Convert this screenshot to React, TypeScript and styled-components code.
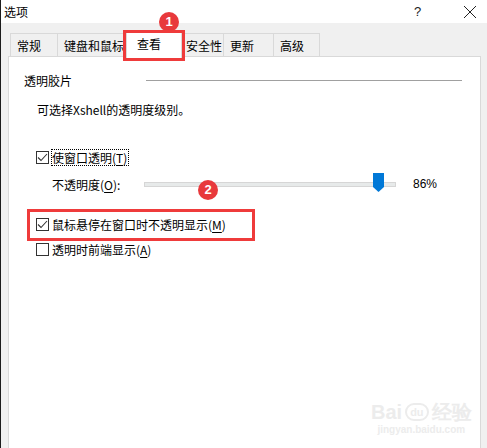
import React from "react";
import styled, { createGlobalStyle } from "styled-components";

const Global = createGlobalStyle`
  html, body { margin: 0; padding: 0; background: #f0f0f0; }
  body { font-family: "Noto Sans CJK SC", "Noto Sans", "Liberation Sans", sans-serif; font-size: 12px; color: #000; }
`;

const Window = styled.div`
  position: relative;
  width: 487px;
  height: 448px;
  overflow: hidden;
  box-sizing: border-box;
  border-left: 1px solid #1c1c1c;
  background: #f0f0f0;
`;

const TitleBar = styled.div`
  height: 23px;
  background: #fff;
  display: flex;
  align-items: center;
  padding-left: 3px;
  line-height: 16px;
`;

const TitleText = styled.div`
  flex: 1;
  font-size: 12px;
`;

const Help = styled.div`
  width: 14px;
  font-family: "Liberation Sans", sans-serif;
  font-size: 13px;
  margin-right: 34px;
  color: #222;
`;

const Close = styled.div`
  width: 16px;
  height: 16px;
  margin-right: 9px;
  display: flex;
  align-items: center;
  justify-content: center;
`;

const Body = styled.div`
  padding: 7px 6px 0 7px;
`;

const TabStrip = styled.div`
  display: flex;
  align-items: flex-end;
  height: 27px;
  padding-left: 2px;
  position: relative;
  z-index: 1;
`;

const Tab = styled.div<{ $w: number; $active?: boolean; $first?: boolean }>`
  box-sizing: border-box;
  width: ${(p) => p.$w}px;
  height: ${(p) => (p.$active ? 28 : 24)}px;
  margin: ${(p) => (p.$active ? "0 -2px -1px -2px" : "0")};
  padding-left: ${(p) => (p.$active ? 10 : 6)}px;
  padding-top: ${(p) => (p.$active ? 5 : 4)}px;
  background: ${(p) => (p.$active ? "#fff" : "#f0f0f0")};
  border: 1px solid #d9d9d9;
  border-bottom: ${(p) => (p.$active ? "none" : "1px solid #d9d9d9")};
  border-left: ${(p) => (p.$first || p.$active ? "1px solid #d9d9d9" : "none")};
  position: relative;
  z-index: ${(p) => (p.$active ? 2 : 1)};
  white-space: nowrap;
  overflow: hidden;
  line-height: 16px;
  font-size: 12px;
`;

const Panel = styled.div`
  box-sizing: border-box;
  width: 473px;
  height: 400px;
  background: #fff;
  border: 1px solid #d9d9d9;
  margin-top: -1px;
  padding-top: 16px;
  display: flex;
  flex-direction: column;
`;

const GroupHeader = styled.div`
  display: flex;
  align-items: center;
  height: 16px;
  padding-left: 15px;
  padding-right: 18px;
  line-height: 16px;
`;

const GroupLine = styled.div`
  flex: 1;
  height: 1px;
  background: #a0a0a0;
  margin-left: 74px;
  margin-top: -2px;
`;

const Text = styled.div<{ $top: number; $left: number }>`
  height: 16px;
  line-height: 16px;
  margin-top: ${(p) => p.$top}px;
  padding-left: ${(p) => p.$left}px;
  white-space: nowrap;
`;

const CheckRow = styled.div<{ $top: number }>`
  display: flex;
  align-items: center;
  height: 16px;
  margin-top: ${(p) => p.$top}px;
  padding-left: 27px;
`;

const Box = styled.div`
  box-sizing: border-box;
  width: 13px;
  height: 13px;
  border: 1px solid #333;
  background: #fff;
  display: flex;
  align-items: center;
  justify-content: center;
  margin-right: 3px;
`;

const Label = styled.span<{ $focus?: boolean }>`
  line-height: 15px;
  padding: 0 1px 0 0;
  outline: ${(p) => (p.$focus ? "1px dotted #000" : "none")};
  white-space: nowrap;
`;

const U = styled.span`
  text-decoration: underline;
  text-underline-offset: 2px;
`;

const SliderRow = styled.div`
  display: flex;
  align-items: center;
  height: 16px;
  margin-top: 11px;
  padding-left: 43px;
`;

const SliderLabel = styled.span`
  width: 92px;
  white-space: nowrap;
`;

const Track = styled.div`
  position: relative;
  box-sizing: border-box;
  width: 252px;
  height: 5px;
  background: #e7eaea;
  border: 1px solid #d6d6d6;
`;

const Thumb = styled.svg`
  position: absolute;
  top: -10px;
`;

const Percent = styled.span`
  margin-left: 17px;
  font-family: "Liberation Sans", "Noto Sans", sans-serif;
  font-size: 12px;
`;

const HighlightBox = styled.div<{ $x: number; $y: number; $w: number; $h: number }>`
  position: absolute;
  left: ${(p) => p.$x}px;
  top: ${(p) => p.$y}px;
  width: ${(p) => p.$w}px;
  height: ${(p) => p.$h}px;
  box-sizing: border-box;
  border: 3px solid #ef3b3b;
  z-index: 5;
`;

const Badge = styled.div<{ $x: number; $y: number }>`
  position: absolute;
  left: ${(p) => p.$x}px;
  top: ${(p) => p.$y}px;
  width: 20px;
  height: 20px;
  border-radius: 50%;
  background: #e8393c;
  color: #fff;
  font-family: "Liberation Sans", sans-serif;
  font-weight: bold;
  font-size: 13px;
  line-height: 20px;
  text-align: center;
  z-index: 4;
`;

const Watermark = styled.div`
  position: absolute;
  left: 370px;
  top: 400px;
  color: #ececec;
  display: flex;
  flex-direction: column;
  align-items: center;
`;

const WmTop = styled.div`
  font-family: "Liberation Sans", sans-serif;
  font-weight: bold;
  font-size: 20px;
  line-height: 24px;
  display: flex;
  align-items: center;
  gap: 3px;
`;

const WmPaw = styled.span`
  font-size: 11px;
  border: 2px solid #ececec;
  border-radius: 10px;
  padding: 0 3px;
  line-height: 14px;
`;

const WmSub = styled.div`
  font-family: "Liberation Sans", sans-serif;
  font-size: 10px;
  font-weight: bold;
  line-height: 12px;
`;

const Check = () => (
  <svg width="11" height="11" viewBox="0 0 11 11">
    <path d="M1 5.5 L4 8.5 L10 2" fill="none" stroke="#333" strokeWidth="1.1" />
  </svg>
);

const tabs = [
  { t: "常规", w: 48 },
  { t: "键盘和鼠标", w: 70 },
  { t: "查看", w: 56, active: true },
  { t: "安全性", w: 44 },
  { t: "更新", w: 50 },
  { t: "高级", w: 46 },
];

export default function App() {
  const value = 0.93;
  return (
    <>
      <Global />
      <Window>
        <TitleBar>
          <TitleText>选项</TitleText>
          <Help>?</Help>
          <Close>
            <svg width="14" height="14" viewBox="0 0 14 14">
              <path d="M1 1 L13 13 M13 1 L1 13" stroke="#222" strokeWidth="1" />
            </svg>
          </Close>
        </TitleBar>
        <Body>
          <TabStrip>
            {tabs.map((tb, i) => (
              <Tab key={tb.t} $w={tb.w} $active={tb.active} $first={i === 0}>
                {tb.t}
              </Tab>
            ))}
          </TabStrip>
          <Panel>
            <GroupHeader>
              透明胶片
              <GroupLine />
            </GroupHeader>
            <Text $top={13} $left={28}>可选择Xshell的透明度级别。</Text>
            <CheckRow $top={31}>
              <Box><Check /></Box>
              <Label $focus>使窗口透明(<U>T</U>)</Label>
            </CheckRow>
            <SliderRow>
              <SliderLabel>不透明度(<U>O</U>):</SliderLabel>
              <Track>
                <Thumb
                  width="11"
                  height="19"
                  viewBox="0 0 11 19"
                  style={{ left: `${Math.round(value * 252) - 6}px` }}
                >
                  <path d="M0 0 H11 V14 L5.5 19 L0 14 Z" fill="#0078d7" />
                </Thumb>
              </Track>
              <Percent>86%</Percent>
            </SliderRow>
            <CheckRow $top={24}>
              <Box><Check /></Box>
              <Label>鼠标悬停在窗口时不透明显示(<U>M</U>)</Label>
            </CheckRow>
            <CheckRow $top={9}>
              <Box />
              <Label>透明时前端显示(<U>A</U>)</Label>
            </CheckRow>
          </Panel>
        </Body>
        <HighlightBox $x={122} $y={30} $w={62} $h={31} />
        <HighlightBox $x={26} $y={209} $w={228} $h={32} />
        <Badge $x={158} $y={12}>1</Badge>
        <Badge $x={197} $y={180}>2</Badge>
        <Watermark>
          <WmTop>
            Bai<WmPaw>du</WmPaw>经验
          </WmTop>
          <WmSub>jingyan.baidu.com</WmSub>
        </Watermark>
      </Window>
    </>
  );
}
